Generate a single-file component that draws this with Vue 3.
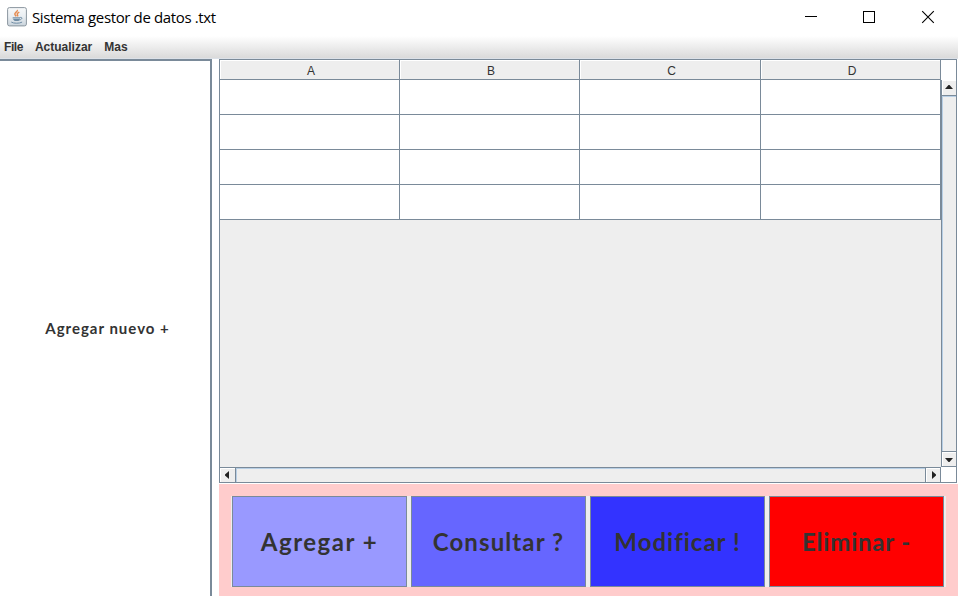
<script setup>
const menus = ['File', 'Actualizar', 'Mas']
const columns = ['A', 'B', 'C', 'D']
const rows = 4
const actions = [
  { label: 'Agregar +', kind: 'add' },
  { label: 'Consultar ?', kind: 'query' },
  { label: 'Modificar !', kind: 'edit' },
  { label: 'Eliminar -', kind: 'remove' }
]
</script>

<template>
  <div class="window">
    <header class="titlebar">
      <svg class="java" width="20" height="20" viewBox="0 0 20 20">
        <defs>
          <linearGradient id="tile" x1="0" y1="0" x2="0" y2="1">
            <stop offset="0" stop-color="#f7f9fa" />
            <stop offset="0.5" stop-color="#e9eef2" />
            <stop offset="1" stop-color="#c9d3db" />
          </linearGradient>
        </defs>
        <rect x="0.6" y="0.6" width="18.8" height="18.3" rx="1.8" fill="url(#tile)" stroke="#8b969f" />
        <path d="M10.2 3c1 1.6-3.1 2.6-2.3 4.4.3.8 1 1.3 1.3 2M12.3 5.2c-1.5.8-2.4 1.5-1.9 2.4.4.7.6 1.2 0 1.8" fill="none" stroke="#e58b50" stroke-width="1.5" />
        <path d="M5.6 10.2h7.6c-.1 1.8-.8 3.3-1.8 3.7H7.7c-1.2-.6-1.9-2-2.1-3.7Z" fill="#6f8ca4" />
        <path d="M6 11.4h6.8" stroke="#c7d5df" stroke-width=".7" />
        <path d="M13.2 10.4c2.4-.5 2.4 2-.9 2.6M4.3 15.1c2.2 1.5 8.3 1.5 10.8 0" fill="none" stroke="#6f8ca4" />
      </svg>
      <h1>Sistema gestor de datos .txt</h1>
      <div class="controls">
        <svg width="14" height="14" shape-rendering="crispEdges"><path d="M1 6.5h12" stroke="#000" /></svg>
        <svg width="14" height="14" shape-rendering="crispEdges"><rect x="1.5" y="1.5" width="11" height="11" fill="none" stroke="#000" /></svg>
        <svg width="14" height="14"><path d="M1.2 1.2l11.6 11.6M12.8 1.2L1.2 12.8" stroke="#000" stroke-width="1.1" /></svg>
      </div>
    </header>
    <nav class="menubar">
      <span v-for="m in menus" :key="m">{{ m }}</span>
    </nav>
    <main class="body">
      <aside class="side"><span>Agregar nuevo +</span></aside>
      <section class="content">
        <div class="scrollpane">
          <div class="view">
            <div class="line head">
              <div v-for="c in columns" :key="c" class="th">{{ c }}</div>
            </div>
            <div v-for="r in rows" :key="r" class="line row">
              <div v-for="c in columns" :key="c" class="td"></div>
            </div>
          </div>
          <div class="vside">
            <div class="corner-top"></div>
            <div class="vbar">
              <div class="arrow up"><svg width="8" height="4"><path d="M0 4L3.5 0h1L8 4Z" fill="#222" /></svg></div>
              <div class="track"></div>
              <div class="arrow down"><svg width="8" height="4"><path d="M0 0L3.5 4h1L8 0Z" fill="#222" /></svg></div>
            </div>
          </div>
          <div class="hbar">
            <div class="arrow left"><svg width="4" height="8"><path d="M4 0L0 3.5v1L4 8Z" fill="#222" /></svg></div>
            <div class="track"></div>
            <div class="arrow right"><svg width="4" height="8"><path d="M0 0l4 3.5v1L0 8Z" fill="#222" /></svg></div>
          </div>
          <div class="corner"></div>
        </div>
        <footer class="actions">
          <div class="group">
            <button v-for="a in actions" :key="a.kind" :class="a.kind"><span>{{ a.label }}</span></button>
          </div>
        </footer>
      </section>
    </main>
  </div>
</template>

<style>
body {
  margin: 0;
  overflow: hidden;
}
</style>

<style scoped>
* {
  box-sizing: border-box;
}
svg {
  display: block;
}
.window {
  width: 958px;
  height: 596px;
  display: flex;
  flex-direction: column;
  background: #fff;
  overflow: hidden;
}
.titlebar {
  height: 36px;
  flex: none;
  display: flex;
  align-items: center;
  padding: 0 23px 2px 7px;
}
h1 {
  margin: 0 0 0 5px;
  font: 400 15px/20px "Open Sans", "Noto Sans", sans-serif;
  letter-spacing: -0.37px;
  color: #000;
}
.controls {
  margin-left: auto;
  display: flex;
  gap: 44px;
}
.controls svg:last-child {
  margin-left: 1px;
}
.menubar {
  height: 23px;
  flex: none;
  display: flex;
  gap: 12px;
  padding: 2px 4px 0;
  font: bold 12px/18px "Liberation Sans", Arial, sans-serif;
  color: #333;
  background: linear-gradient(#fff, #dadada);
  border-bottom: 1px solid #dce1e8;
}
.menubar span:first-child {
  letter-spacing: -0.45px;
}
.body {
  flex: 1;
  display: flex;
  gap: 7px;
  min-height: 0;
}
.side {
  width: 212px;
  display: flex;
  align-items: center;
  justify-content: center;
  border: solid #7a8a99;
  border-width: 2px 2px 0 0;
  font: bold 15px/20px "Century Gothic", Lato, sans-serif;
  letter-spacing: 1px;
  color: #333;
  padding: 0 0 2px 5px;
}
.content {
  width: 739px;
  display: flex;
  flex-direction: column;
}
.scrollpane {
  width: 738px;
  height: 424px;
  display: grid;
  grid-template-columns: 721px 15px;
  grid-template-rows: 407px 15px;
  border: 1px solid #7a8a99;
}
.view {
  background: #eee;
}
.line {
  display: grid;
  grid-template-columns: 180px 180px 181px 180px;
}
.line > div {
  border: solid #7a8a99;
  border-width: 0 1px 1px 0;
}
.th {
  height: 20px;
  background: #eee;
  box-shadow: inset 1px 1px #fff;
  font: 12px/22px "Liberation Sans", Arial, sans-serif;
  color: #333;
  text-align: center;
  padding-left: 3px;
}
.td {
  height: 35px;
  background: #fff;
}
.vside {
  display: flex;
  flex-direction: column;
}
.corner-top {
  height: 20px;
}
.vbar {
  flex: 1;
  display: flex;
  flex-direction: column;
  border-left: 1px solid #7a8a99;
  border-bottom: 1px solid #7a8a99;
}
.arrow {
  display: flex;
  align-items: center;
  justify-content: center;
  background: #eee;
  box-shadow: inset 1px 1px #fff;
  flex: none;
}
.track {
  flex: 1;
  background: #eee;
  box-shadow: inset 1px 1px #b8cfe5;
}
.up {
  height: 16px;
  border-bottom: 1px solid #7a8a99;
  padding-bottom: 2px;
}
.down {
  height: 15px;
  border-top: 1px solid #7a8a99;
  padding-top: 2px;
}
.hbar {
  display: flex;
  border-top: 1px solid #7a8a99;
  border-right: 1px solid #7a8a99;
}
.left {
  width: 16px;
  border-right: 1px solid #7a8a99;
  padding-right: 2px;
}
.right {
  width: 15px;
  border-left: 1px solid #7a8a99;
  padding-left: 2px;
}
.corner {
  background: #fff;
}
.actions {
  flex: 1;
  margin-top: 1px;
  padding: 12px 0 0 12px;
  background: #fcc;
}
.group {
  width: 715px;
  height: 91px;
  display: flex;
  gap: 4px;
  padding: 0 2px 0 1px;
  background: #eee;
}
button {
  width: 175px;
  height: 91px;
  padding: 1px 0 0;
  border: 1px solid #7a8a99;
  border-radius: 0;
  font: bold 24px/30px "Century Gothic", Lato, sans-serif;
  letter-spacing: 0.8px;
  color: #333;
}
.add {
  background: #99f;
  letter-spacing: 1.5px;
}
.query {
  background: #66f;
  letter-spacing: 1.1px;
}
.edit {
  background: #33f;
  letter-spacing: 1px;
}
.remove {
  background: #f00;
}
</style>
